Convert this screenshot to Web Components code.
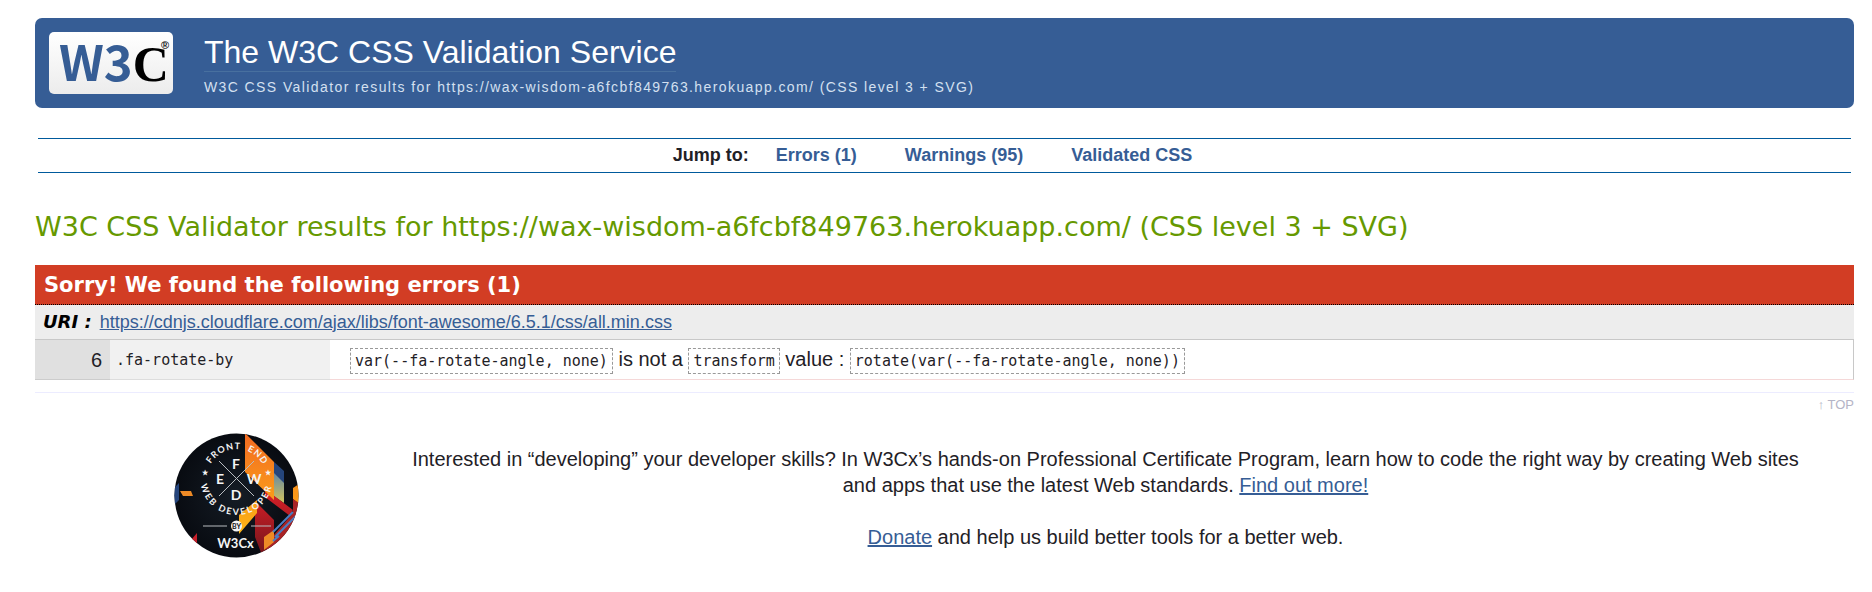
<!DOCTYPE html>
<html lang="en">
<head>
<meta charset="utf-8">
<title>W3C CSS Validator results</title>
<style>
  body {
    margin: 18px 18px 0 35px;
    background: #fff;
    color: #1f2126;
    font: 20px/26px "Liberation Sans", Arial, sans-serif;
  }
</style>
</head>
<body>
<results-page></results-page>

<script>
const define = (name, html) => {
  const template = document.createElement('template');
  template.innerHTML = html;
  customElements.define(name, class extends HTMLElement {
    constructor() {
      super();
      this.attachShadow({ mode: 'open' }).append(template.content.cloneNode(true));
    }
  });
};

define('w3c-logo', `
<style>
  :host { display: block; width: 124px; height: 62px; border-radius: 5px;
          background: linear-gradient(#fff, #ececec); }
  svg { display: block; overflow: visible; }
  .mark { font: 700 49px "Noto Sans CJK SC", sans-serif; fill: #365d95; }
  .c { font: 700 50px "Liberation Serif", serif; fill: #000; }
  .r { font: 700 11px "Liberation Sans", sans-serif; fill: #111; }
</style>
<svg width="124" height="62" viewBox="0 0 124 62" role="img" aria-label="W3C">
  <text class="mark" x="10" y="49">W3<tspan class="c">C</tspan></text>
  <text class="r" x="112" y="17">®</text>
</svg>`);

define('page-banner', `
<style>
  :host { display: block; background: #365d95; color: #fff; border-radius: 7px; }
  header { display: flex; align-items: flex-start; gap: 31px; padding: 14px; height: 62px; }
  a { color: inherit; text-decoration: none; }
  h1 { margin: 0; font-size: 32px; line-height: 41px; height: 39px; font-weight: 400; width: fit-content;
       border-bottom: 1px solid #48709f; }
  p { margin: 4px 0 0; font-size: 14px; line-height: 22px; letter-spacing: 0.1em; color: #d4e0f0; }
</style>
<header>
  <a href="#w3c"><w3c-logo></w3c-logo></a>
  <div>
    <h1><a href="#home"><slot name="title"></slot></a></h1>
    <p><slot name="subtitle"></slot></p>
  </div>
</header>`);

define('jump-nav', `
<style>
  :host { display: block; margin: 30px 3px 0; border: solid #005a9c; border-width: 1px 0; }
  nav { display: flex; justify-content: center; height: 33px;
        font-size: 18px; line-height: 32px; font-weight: 700; }
  span { margin-right: 3px; }
  ::slotted(a) { color: #365d95; text-decoration: none; padding: 0 24px; }
</style>
<nav><span>Jump to:</span><slot></slot></nav>`);

define('css-code', `
<style>
  :host { display: inline; }
  code { display: inline-block; font: 15px/24px "DejaVu Sans Mono", monospace;
         padding: 0 4px; border: 1px dashed #999; }
</style>
<code><slot></slot></code>`);

define('error-report', `
<style>
  :host { display: block; margin-top: 21px; }
  h3 { margin: 0; padding: 1px 9px 0; color: #fff; background: #d23d24; border-bottom: 1px dotted #000;
       font: 700 21px/38px "DejaVu Sans", Verdana, sans-serif; }
  h4 { margin: 0; padding: 0 8px; background: #ededed; display: flex; align-items: baseline; gap: 8px;
       font: italic 700 18px/34px "DejaVu Sans", Verdana, sans-serif; color: #000; }
  h4 a { font: 400 18px/34px "Liberation Sans", Arial, sans-serif; color: #365d95; }
  table { width: 100%; border-collapse: separate; border-spacing: 0; table-layout: fixed;
          border-top: 1px solid #c8c8c8; }
  td { height: 39px; padding: 0; box-sizing: content-box; vertical-align: middle; }
  .line { width: 67px; padding-right: 8px; text-align: right; background: #e0e0e0; border-bottom: 1px solid #ccc; }
  .selector { width: 214px; padding-left: 6px; background: #f1f1f1; border-bottom: 1px solid #ddd;
              font: 15px/24px "DejaVu Sans Mono", monospace; }
  .message { padding-left: 20px; border-bottom: 1px solid #f5d8d8; border-right: 1px solid #c8c8c8; }
</style>
<h3>Sorry! We found the following errors (1)</h3>
<h4>URI : <a href="#stylesheet">https://cdnjs.cloudflare.com/ajax/libs/font-awesome/6.5.1/css/all.min.css</a></h4>
<table>
  <tr>
    <td class="line">6</td>
    <td class="selector">.fa-rotate-by</td>
    <td class="message"><css-code>var(--fa-rotate-angle, none)</css-code> is not a <css-code>transform</css-code> value : <css-code>rotate(var(--fa-rotate-angle, none))</css-code></td>
  </tr>
</table>`);

define('back-to-top', `
<style>
  :host { display: block; margin-top: 12px; border-top: 1px solid #ececff; text-align: right;
          font-size: 13px; line-height: 24px; }
  a { color: #b4b4c6; text-decoration: none; }
</style>
<a href="#top">↑ TOP</a>`);

define('course-badge', `
<style>
  :host { display: block; width: 125px; height: 125px; }
  svg { display: block; overflow: visible; }
  text { fill: #f4f4f4; font-family: Lato, sans-serif; font-weight: 700; }
  .big { font-size: 14px; text-anchor: middle; }
  .ring { font-size: 9px; letter-spacing: 1px; }
</style>
<svg width="125" height="125" viewBox="0 0 125 125" role="img" aria-label="Front End Web Developer by W3Cx">
  <defs>
    <clipPath id="disc"><circle cx="62.5" cy="62.5" r="62"/></clipPath>
    <radialGradient id="night"><stop offset="0" stop-color="#151c25"/><stop offset="1" stop-color="#080b11"/></radialGradient>
    <linearGradient id="flame" x1="0" y1="0" x2="0" y2="1"><stop offset="0" stop-color="#f36a22"/><stop offset="1" stop-color="#fdb515"/></linearGradient>
    <linearGradient id="sky" x1="0" y1="0" x2="0" y2="1"><stop offset="0" stop-color="#4779b8"/><stop offset="1" stop-color="#d2c35c"/></linearGradient>
    <linearGradient id="blood" x1="0" y1="0" x2="0" y2="1"><stop offset="0" stop-color="#dd2028"/><stop offset="1" stop-color="#74151c"/></linearGradient>
    <path id="top" d="M32.5 46a30 30 0 0 1 60 0"/>
    <path id="bottom" d="M26.5 46a36 36 0 0 0 72 0V40"/>
  </defs>
  <g clip-path="url(#disc)">
    <rect width="125" height="125" fill="url(#night)"/>
    <path fill="#25457c" d="M100 29 120 47v14L100 45zM0 55l5-5v17l-5 5z"/>
    <path fill="#0a0d14" d="M110 34l10 10v22l-10-9z"/>
    <path fill="url(#sky)" d="M92 32l18 18v20L92 58z"/>
    <path fill="url(#blood)" d="M91 56l28 21-3 6-25-19zM81 68l19 19v17l-12 18-7-18z"/>
    <path fill="url(#flame)" d="M71 0l29 29v38L71 39zM83 67v13L65 101V82zM119 55l6-4v20l-6-5z"/>
    <path fill="#a92325" d="M119 66l6 4v21l-26 34-10-4 10-18 20-23z"/>
    <path fill="#ed8a26" d="M90 104l10-7v12l-10 8zM6 58h11l2 5H9z"/>
    <path fill="#c51f2a" d="M17 107l6-7v13z"/>
    <path stroke="#4b7dc2" stroke-width="2" d="M99 99l20-20M101 104l21-21M99 108l6-5"/>
    <path stroke="#b8bcc0" d="M45 28l35 35M80 28 45 63M29 93h24M77 93h20"/>
    <circle cx="62.5" cy="93" r="5.5" fill="#f4f4f4"/>
  </g>
  <text class="big" x="62" y="36">F</text>
  <text class="big" x="46" y="51">E</text>
  <text class="big" x="80" y="51">W</text>
  <text class="big" x="62" y="67">D</text>
  <text class="ring"><textPath href="#top" startOffset="16">FRONT</textPath></text>
  <text class="ring"><textPath href="#top" startOffset="58">END</textPath></text>
  <text class="ring" style="letter-spacing:2px"><textPath href="#bottom" startOffset="6">WEB DEVELOPER</textPath></text>
  <text x="28" y="42" font-size="7">★</text>
  <text x="91" y="42" font-size="7">★</text>
  <text x="62.5" y="95.5" font-size="7" text-anchor="middle" style="fill:#111">BY</text>
  <text x="61.5" y="115" font-size="13" text-anchor="middle">W3Cx</text>
</svg>`);

define('promo-section', `
<style>
  :host { display: flex; gap: 105px; margin-top: 16px; padding: 0 47px 0 139px; }
  course-badge { flex: none; }
  div { flex: 1; text-align: center; padding-top: 13px; }
  p { margin: 0 0 26px; }
  a { color: #365d95; }
</style>
<course-badge></course-badge>
<div>
  <p>Interested in “developing” your developer skills? In W3Cx’s hands-on Professional Certificate Program, learn how to code the right way by creating Web sites and apps that use the latest Web standards. <a href="#course">Find out more!</a></p>
  <p><a href="#donate">Donate</a> and help us build better tools for a better web.</p>
</div>`);

define('results-page', `
<style>
  :host { display: block; }
  h2 { margin: 37px 0 0; color: #690; font: 400 27px/34px "DejaVu Sans", Verdana, sans-serif; }
</style>
<page-banner>
  <span slot="title">The W3C CSS Validation Service</span>
  <span slot="subtitle">W3C CSS Validator results for https://wax-wisdom-a6fcbf849763.herokuapp.com/ (CSS level 3 + SVG)</span>
</page-banner>
<jump-nav>
  <a href="#errors">Errors (1)</a>
  <a href="#warnings">Warnings (95)</a>
  <a href="#css">Validated CSS</a>
</jump-nav>
<main>
  <h2>W3C CSS Validator results for https://wax-wisdom-a6fcbf849763.herokuapp.com/ (CSS level 3 + SVG)</h2>
  <error-report></error-report>
  <back-to-top></back-to-top>
  <promo-section></promo-section>
</main>`);
</script>
</body>
</html>
